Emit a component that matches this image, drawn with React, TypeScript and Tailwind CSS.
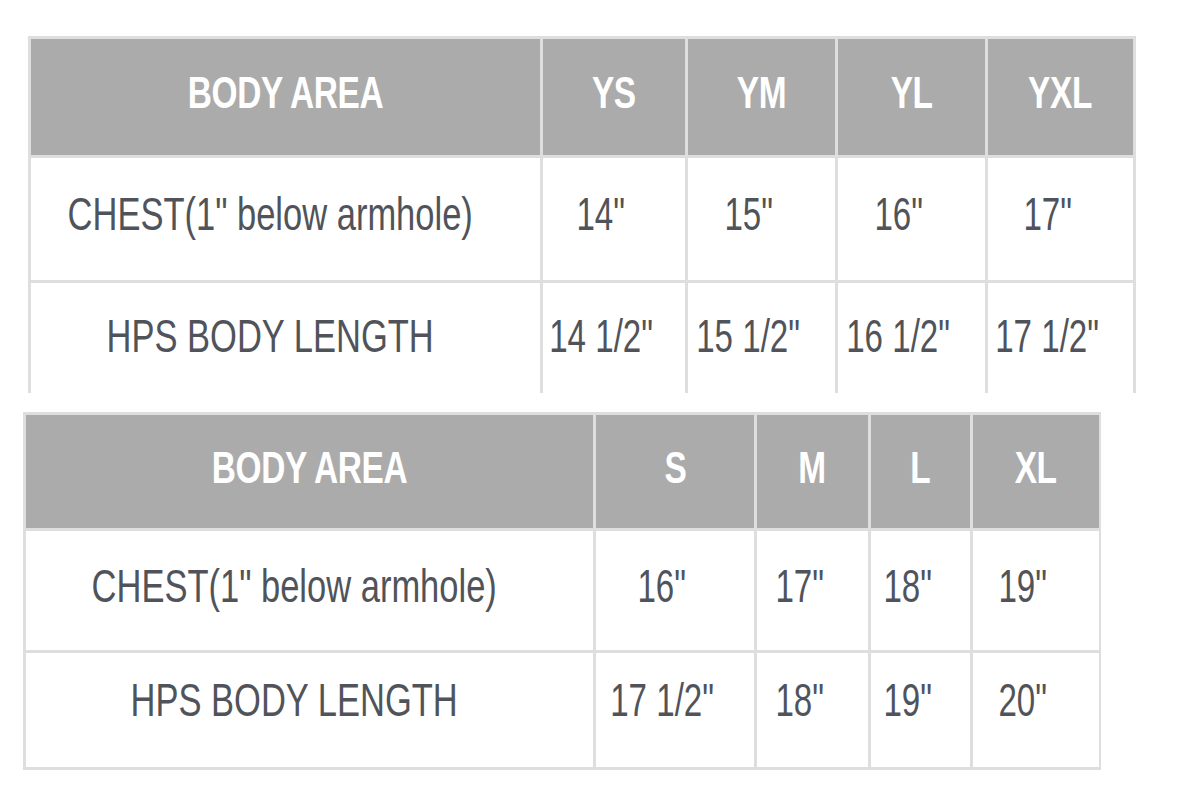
import React from 'react';

type SizeTable = {
  sizes: string[];
  chest: string[];
  length: string[];
  cols: string;
  rows: string;
  wrap: string;
};

const tables: SizeTable[] = [
  {
    sizes: ['YS', 'YM', 'YL', 'YXL'],
    chest: ['14"', '15"', '16"', '17"'],
    length: ['14 1/2"', '15 1/2"', '16 1/2"', '17 1/2"'],
    cols: 'grid-cols-[509px_142px_147px_147px_145px]',
    rows: 'grid-rows-[116px_122px_125px]',
    wrap: 'ml-[28px] mt-[36px] w-[1108px] h-[357px] overflow-hidden',
  },
  {
    sizes: ['S', 'M', 'L', 'XL'],
    chest: ['16"', '17"', '18"', '19"'],
    length: ['17 1/2"', '18"', '19"', '20"'],
    cols: 'grid-cols-[567px_158px_111px_99px_126px]',
    rows: 'grid-rows-[113px_119px_114px]',
    wrap: 'ml-[23px] mt-[19px] w-[1078px]',
  },
];

const HeadCell = ({ text }: { text: string }) => (
  <div className="bg-[#ababab] flex items-center justify-center">
    <span className="inline-block scale-x-[0.76] -translate-y-[4px] whitespace-nowrap text-white font-bold text-[44px] leading-none tracking-[-0.5px]">
      {text}
    </span>
  </div>
);

// last row sits a little higher in its cell than the first one
const BodyCell = ({ text, label, last }: { text: string; label?: boolean; last?: boolean }) => (
  <div className={`bg-white flex items-center justify-center ${label ? 'pr-[30px]' : 'pr-[26px]'}`}>
    <span
      className={`inline-block whitespace-nowrap text-[#50545a] text-[46px] leading-none ${
        label ? 'scale-x-[0.75]' : 'scale-x-[0.72]'
      } ${last ? '-translate-y-[10px]' : '-translate-y-[5px]'}`}
    >
      {text}
    </span>
  </div>
);

const Table = ({ t }: { t: SizeTable }) => (
  <div className={t.wrap}>
    <div className={`grid ${t.cols} ${t.rows} gap-[3px] p-[3px] bg-[#dedede]`}>
      <HeadCell text="BODY AREA" />
      {t.sizes.map((s) => (
        <HeadCell key={s} text={s} />
      ))}
      <BodyCell text={'CHEST(1" below armhole)'} label />
      {t.chest.map((v, i) => (
        <BodyCell key={'c' + i} text={v} />
      ))}
      <BodyCell text="HPS BODY LENGTH" label last />
      {t.length.map((v, i) => (
        <BodyCell key={'l' + i} text={v} last />
      ))}
    </div>
  </div>
);

export default function App() {
  return (
    <div className="w-[1197px] h-[790px] bg-white overflow-hidden font-['Liberation_Sans',Arial,sans-serif]">
      {tables.map((t, i) => (
        <Table key={i} t={t} />
      ))}
    </div>
  );
}
